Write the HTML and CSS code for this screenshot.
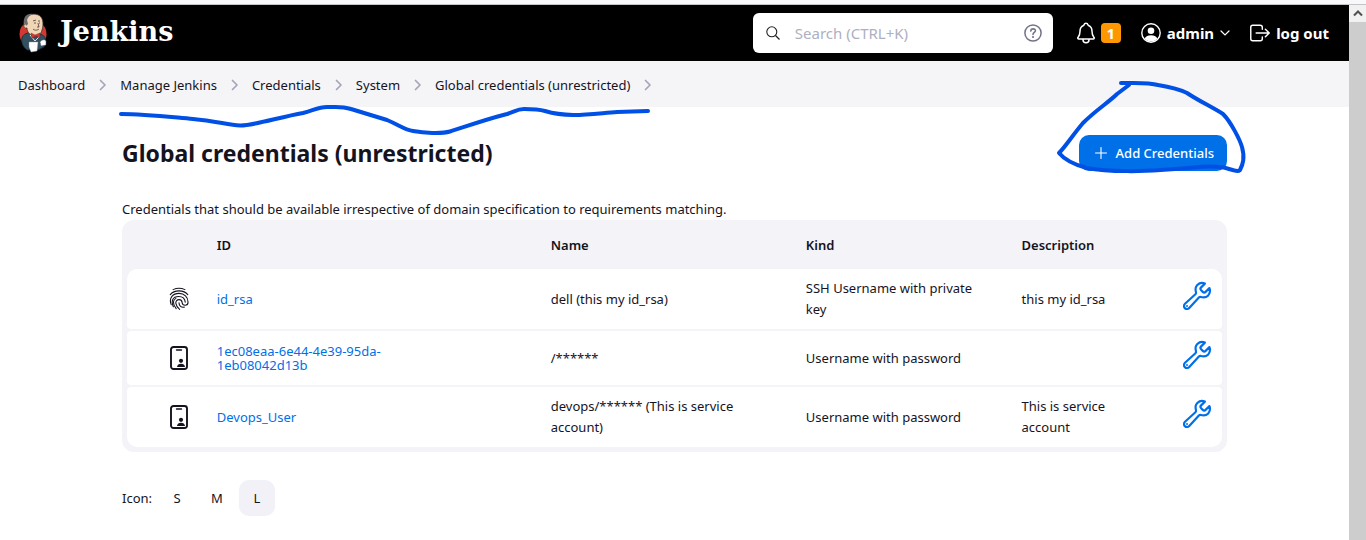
FILE: index.html
```html
<!DOCTYPE html>
<html lang="en">
<head>
<meta charset="utf-8">
<meta name="viewport" content="width=device-width, initial-scale=1">
<title>Global credentials (unrestricted) [Jenkins]</title>
<link rel="stylesheet" href="styles.css">
</head>
<body>
<svg class="sprite" aria-hidden="true">
  <symbol id="chevron" viewBox="0 0 8 14"><path d="M1.500 2.500l4.500 4.500-4.500 4.500" fill="none" stroke="currentColor" stroke-width="1.700" stroke-linecap="round" stroke-linejoin="round"/></symbol>
  <symbol id="wrench" viewBox="0 0 512 512"><path d="M393.870 190a32.100 32.100 0 01-45.250 0l-26.570-26.570a32.090 32.090 0 010-45.260L382.190 58a1 1 0 00-.3-1.640c-38.820-16.640-89.150-8.160-121.110 23.570-30.580 30.350-32.320 76-21.120 115.840a31.930 31.930 0 01-9.060 32.080L64 380a48.170 48.170 0 1068 68l153.860-167a31.930 31.930 0 0131.600-9.130c39.540 10.590 84.540 8.600 114.720-21.190 32.490-32 39.500-88.560 23.750-120.930a1 1 0 00-1.600-.26z" fill="none" stroke="currentColor" stroke-width="35" stroke-linecap="round"/><circle cx="96" cy="416" r="16" fill="currentColor"/></symbol>
  <symbol id="badge" viewBox="0 0 18 24"><rect x="1" y="1" width="16" height="22" rx="2.500" fill="none" stroke="currentColor" stroke-width="1.900"/><path d="M6.500 4h5" stroke="currentColor" stroke-width="1.400" stroke-linecap="round"/><circle cx="11" cy="14.800" r="2.100" fill="currentColor"/><path d="M7 21c0-4.500 8-4.500 8 0z" fill="currentColor"/></symbol>
  <symbol id="fingerprint" viewBox="0 0 64 72"><g fill="none" stroke="currentColor" stroke-width="3.500" stroke-linecap="round"><path d="M13 6C24 1 40 1 51 6"/><path d="M4 22C16 6 48 6 60 22"/><path d="M7 54C-2 31 14 18 32 18c17 0 29 12 29 28 0 13-18 13-19 1-1-7-6-9-10-9-6 0-11 5-10 12 1 8 6 14 12 19"/><path d="M14 61C6 43 11 28 31 28c13 0 20 8 21 18"/><path d="M32 48c0 10 7 16 17 14"/><path d="M23 67C9 50 14 38 22 34"/></g></symbol>
</svg>

<div class="browser-edge"></div>
<div class="viewport">
  <div class="page">
    <header class="header">
      <a class="brand" href="#">
        <svg class="brand-logo" viewBox="0 0 31 40" aria-hidden="true">
          <circle cx="15" cy="21" r="13.500" fill="#d33833"/>
          <path d="M4 25c1-4 6-6 11-5l7 1c4 1 6 4 6 8l-2 5-6 3H9c-4-3-6-7-5-12z" fill="#335061" stroke="#162833" stroke-width=".8"/>
          <path d="M8 5C11 0 20 0 23 4c3 4 2 10 1 13-1 4-4 6-7 6-5 0-8-4-8-8-4-2-4-7-1-10z" fill="#f0d6b7" stroke="#3b3028" stroke-width=".8"/>
          <path d="M15 1C9 0 5 4 6 10l2 3 2-2-1-4c1-3 3-5 6-6z" fill="#6d6b6d"/>
          <path d="M7 11c-2 1-1 5 2 4" fill="#f0d6b7" stroke="#3b3028" stroke-width=".6"/>
          <path d="M15 8l3-1M20 8h2M16 10h2M21 10h1M20 10l1 4h-2M15 16c2 2 5 1 6 0" fill="none" stroke="#4a3a30" stroke-width=".8"/>
          <path d="M12 22l5 6 4-4" fill="none" stroke="#dbe4e8" stroke-width="1"/>
          <path d="M13 20l4 2 5-2v5l-4-2-4 2z" fill="#d33833" stroke="#7d1715" stroke-width=".4"/>
          <path d="M11 29h9l-1 9-6 1-2-5z" fill="#fff" stroke="#99a" stroke-width=".4"/>
          <path d="M22 29c2-3 6-3 6 0v3l-5 1z" fill="#fff" stroke="#556" stroke-width=".5"/>
        </svg>
        <span class="brand-name">Jenkins</span>
      </a>
      <form class="search" role="search">
        <svg class="search-icon" viewBox="0 0 14 14" aria-hidden="true"><circle cx="5.800" cy="5.800" r="5" fill="none" stroke="#222" stroke-width="1.100"/><path d="M9.500 9.500l4 4" stroke="#222" stroke-width="1.300"/></svg>
        <input class="search-input" type="search" placeholder="Search (CTRL+K)" aria-label="Search">
        <a class="search-help" href="#" aria-label="Search help"><svg viewBox="0 0 18 18"><circle cx="9" cy="9" r="8.100" fill="none" stroke="currentColor" stroke-width="1.500"/><path d="M6.800 7.100c0-3.100 4.900-2.900 4.600-.2C11.200 8.500 9 8.400 9 10.500" fill="none" stroke="currentColor" stroke-width="1.600" stroke-linecap="round"/><circle cx="9" cy="13" r="1.100" fill="currentColor"/></svg></a>
      </form>
      <nav class="account" aria-label="Account">
        <a class="account-link alerts" href="#" aria-label="1 alert">
          <svg class="bell" viewBox="64 32 384 448"><path d="M427.680 351.430C402 320 383.870 304 383.870 217.350 383.870 138 343.350 109.730 310 96c-4.430-1.820-8.600-6-9.950-10.550C294.200 65.540 277.800 48 256 48s-38.210 17.550-44 37.470c-1.350 4.600-5.520 8.710-9.950 10.530-33.390 13.750-73.870 41.920-73.870 121.350C128.130 304 110 320 84.320 351.430 73.680 364.450 83 384 101.610 384h308.880c18.510 0 27.770-19.610 17.190-32.570zM320 384v16a64 64 0 01-128 0v-16" fill="none" stroke="currentColor" stroke-width="32" stroke-linejoin="round"/></svg>
          <span class="count">1</span>
        </a>
        <a class="account-link user" href="#">
          <svg class="icon-20" viewBox="0 0 20 20" aria-hidden="true"><circle cx="10" cy="10" r="9.200" fill="none" stroke="currentColor" stroke-width="1.400"/><circle cx="10" cy="7.700" r="3.300" fill="currentColor"/><path d="M3.500 15.500c2-4.500 11-4.500 13 0-3 4-10 4-13 0z" fill="currentColor"/></svg>
          admin
          <svg class="caret" viewBox="0 0 10 6" aria-hidden="true"><path d="M1 1l4 4 4-4" fill="none" stroke="currentColor" stroke-width="1.200" stroke-linecap="round"/></svg>
        </a>
        <a class="account-link" href="#">
          <svg class="icon-20" viewBox="48 48 416 416" aria-hidden="true"><path d="M304 336v40a40 40 0 01-40 40H104a40 40 0 01-40-40V136a40 40 0 0140-40h152c22.090 0 48 17.910 48 40v40M368 336l80-80-80-80M176 256h256" fill="none" stroke="currentColor" stroke-width="30" stroke-linecap="round" stroke-linejoin="round"/></svg>
          log out
        </a>
      </nav>
    </header>

    <nav class="breadcrumbs" aria-label="Breadcrumbs">
      <a href="#">Dashboard</a><svg class="sep"><use href="#chevron"/></svg>
      <a href="#">Manage Jenkins</a><svg class="sep"><use href="#chevron"/></svg>
      <a href="#">Credentials</a><svg class="sep"><use href="#chevron"/></svg>
      <a href="#">System</a><svg class="sep"><use href="#chevron"/></svg>
      <a href="#">Global credentials (unrestricted)</a><svg class="sep"><use href="#chevron"/></svg>
    </nav>

    <main class="main">
      <div class="title-bar">
        <h1 class="title">Global credentials (unrestricted)</h1>
        <button class="add" type="button"><svg class="plus" viewBox="0 0 12 12" aria-hidden="true"><path d="M6 .5v11M.5 6h11" stroke="currentColor" stroke-width="1.100" stroke-linecap="round"/></svg>Add Credentials</button>
      </div>
      <p class="intro">Credentials that should be available irrespective of domain specification to requirements matching.</p>

      <table class="table">
        <colgroup><col class="col-icon"><col class="col-id"><col class="col-name"><col class="col-kind"><col class="col-desc"><col class="col-action"></colgroup>
        <thead>
          <tr><td></td><th scope="col">ID</th><th scope="col">Name</th><th scope="col">Kind</th><th scope="col">Description</th><td></td></tr>
        </thead>
        <tbody>
          <tr>
            <td class="type"><svg class="type-finger"><use href="#fingerprint"/></svg></td>
            <td><a class="id" href="#">id_rsa</a></td>
            <td>dell (this my id_rsa)</td>
            <td>SSH Username with private key</td>
            <td>this my id_rsa</td>
            <td class="action"><a href="#" aria-label="Update id_rsa"><svg class="wrench"><use href="#wrench"/></svg></a></td>
          </tr>
          <tr>
            <td class="type"><svg class="type-badge"><use href="#badge"/></svg></td>
            <td><a class="id" href="#">1ec08eaa-6e44-4e39-95da-1eb08042d13b</a></td>
            <td>/******</td>
            <td>Username with password</td>
            <td></td>
            <td class="action"><a href="#" aria-label="Update 1ec08eaa"><svg class="wrench"><use href="#wrench"/></svg></a></td>
          </tr>
          <tr>
            <td class="type"><svg class="type-badge"><use href="#badge"/></svg></td>
            <td><a class="id" href="#">Devops_User</a></td>
            <td>devops/****** (This is service account)</td>
            <td>Username with password</td>
            <td>This is service account</td>
            <td class="action"><a href="#" aria-label="Update Devops_User"><svg class="wrench"><use href="#wrench"/></svg></a></td>
          </tr>
        </tbody>
      </table>

      <div class="sizes" role="group" aria-labelledby="sizes-label">
        <span class="sizes-label" id="sizes-label">Icon:</span>
        <button class="size" type="button">S</button>
        <button class="size" type="button">M</button>
        <button class="size size-current" type="button" aria-pressed="true">L</button>
      </div>
    </main>
  </div>
  <div class="scrollbar" aria-hidden="true">
    <div class="scroll-up"><svg viewBox="0 0 10 7"><path d="M1 5.500l4-4 4 4" fill="none" stroke="#505050" stroke-width="2"/></svg></div>
  </div>
</div>

<svg class="ink" width="1366" height="540" viewBox="0 0 1366 540" aria-hidden="true">
  <path d="M121 114C145 114 170 117 193 119S228 125 240 125.500C252 126 280 117 303 113C314 110 319 107 327 107C338 107 342 106 351 109L387 120C399 125 405 130 413 131C424 133 441 134 450 131.500C462 128 480 121 507 114C514 112 517 109 524 109C532 109 538 109 545 111C568 118 590 114 617 112L648 111"/>
  <path d="M1121 83C1135 83 1148 82 1158 85C1170 87 1179 89 1187 93C1199 101 1212 107 1223 114C1231 122 1240 140 1242 147C1245 158 1243 164 1240 170C1237 173 1229 168 1221 167C1205 165 1192 168 1175 169C1145 172 1107 172 1087 168C1075 165 1064 159 1059 153C1066 146 1072 136 1083 123C1096 110 1109 102 1117 94L1129 85"/>
</svg>
</body>
</html>
```
FILE: styles.css
```css
* { box-sizing: border-box; }

body {
  margin: 0;
  min-height: 100vh;
  display: flex;
  flex-direction: column;
  background: #fff;
  color: #14141f;
  font: 13px/21px "Noto Sans", "Open Sans", sans-serif;
}

a { color: inherit; text-decoration: none; }
svg { display: block; flex: none; }
button, input { font: inherit; color: inherit; }

.sprite { position: absolute; width: 0; height: 0; }

.browser-edge { height: 5px; background: #f8f8fa; border-bottom: 1px solid #c4c4c8; }
.viewport { flex: 1; display: flex; }
.page { flex: 1; min-width: 0; }

.header {
  display: flex;
  align-items: center;
  height: 56px;
  padding: 0 20px 0 18px;
  background: #000;
  color: #fff;
}
.brand { display: flex; align-items: center; gap: 11px; margin-right: auto; }
.brand-logo { width: 31px; height: 40px; }
.brand-name { font: bold 27px/36px "DejaVu Serif", serif; padding-bottom: 2px; }

.search {
  display: flex;
  align-items: center;
  width: 300px;
  height: 40px;
  padding: 0 11px 0 13px;
  background: #fff;
  border-radius: 6px;
}
.search-icon { width: 14px; height: 14px; }
.search-input {
  flex: 1;
  min-width: 0;
  padding: 0 0 0 15px;
  border: 0;
  outline: 0;
  background: none;
  font-size: 15px;
  color: #14141f;
}
.search-input::placeholder { color: #adb0c0; }
.search-help { color: #737389; }
.search-help svg { width: 18px; height: 18px; }

.account {
  display: flex;
  align-items: center;
  gap: 20px;
  margin-left: 24px;
  font-size: 15px;
  font-weight: 700;
}
.account-link { display: flex; align-items: center; gap: 6px; }
.bell { width: 18px; height: 22px; }
.count {
  width: 20px;
  line-height: 20px;
  text-align: center;
  background: #ff9800;
  border-radius: 4px;
}
.icon-20 { width: 20px; height: 20px; }
.caret { width: 10px; height: 6px; }

.breadcrumbs {
  display: flex;
  align-items: center;
  height: 46px;
  padding: 2px 18px 0;
  background: #f5f5f8;
}
.sep { width: 8px; height: 14px; margin: 0 13px 0 14px; color: #a5a5b8; }

.main { padding: 28px 122px; }
.title-bar { display: flex; align-items: center; justify-content: space-between; }
.title { margin: 0; font-size: 23px; line-height: 36px; font-weight: 700; }
.add {
  display: flex;
  align-items: center;
  gap: 9px;
  height: 36px;
  padding: 0 13px 0 16px;
  border: 0;
  border-radius: 10px;
  background: #0070e8;
  color: #fff;
  font-weight: 500;
}
.plus { width: 12px; height: 12px; }
.intro { margin: 28px 0 0; }

.table {
  width: 100%;
  table-layout: fixed;
  border: solid #f3f3f8;
  border-width: 3px 5px;
  border-radius: 12px;
  border-spacing: 0 2px;
  background: #f3f3f8;
}
.col-icon { width: 7.1%; }
.col-id { width: 30.5%; }
.col-name { width: 23.3%; }
.col-kind { width: 19.7%; }
.col-desc { width: 14.7%; }
.col-action { width: 4.7%; }
.table th { height: 42px; padding: 0 12px 2px; text-align: left; font-weight: 600; }
.table tbody td { height: 54px; padding: 9px 24px 9px 12px; background: #fff; }
.table tbody td:first-child { border-radius: 4px 0 0 4px; }
.table tbody td:last-child { border-radius: 0 4px 4px 0; }
.table tbody tr:first-child td:first-child { border-top-left-radius: 10px; }
.table tbody tr:first-child td:last-child { border-top-right-radius: 10px; }
.table tbody tr:last-child td:first-child { border-bottom-left-radius: 10px; }
.table tbody tr:last-child td:last-child { border-bottom-right-radius: 10px; }
.table tbody .type { padding: 0 16px 0 42px; }
.type-finger { width: 20px; height: 24px; }
.type-badge { width: 18px; height: 24px; margin-left: 1px; }
.id { display: block; max-width: 200px; line-height: 14px; color: #0070e8; }
.table tbody .action { padding: 0 0 6px 10px; }
.action a { color: #0070e8; }
.wrench { width: 32px; height: 32px; }

.sizes { display: flex; align-items: center; gap: 4px; margin-top: 28px; }
.sizes-label { width: 33px; }
.size {
  width: 36px;
  height: 36px;
  padding: 0;
  border: 0;
  border-radius: 10px;
  background: none;
}
.size-current { background: #f1f1f7; }

.scrollbar { width: 17px; background: #cdcdcd; }
.scroll-up { display: flex; align-items: center; justify-content: center; height: 17px; background: #f1f1f1; }
.scroll-up svg { width: 10px; height: 7px; }

.ink { position: absolute; top: 0; left: 0; pointer-events: none; }
.ink path { fill: none; stroke: #0050e6; stroke-width: 4; stroke-linecap: round; stroke-linejoin: round; }
```
